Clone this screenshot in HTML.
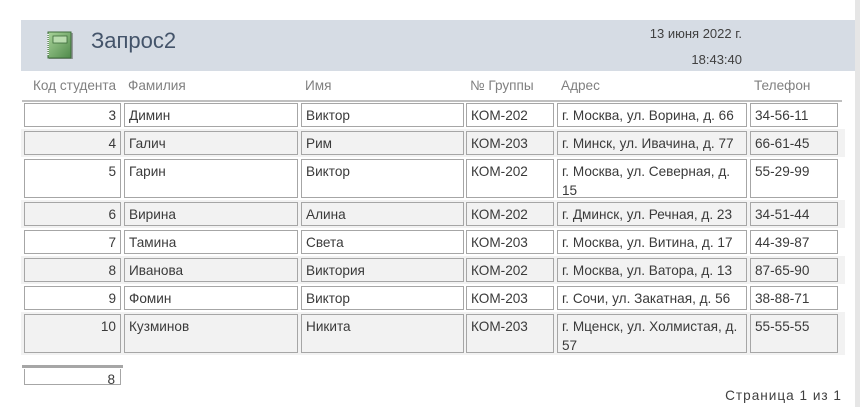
<!DOCTYPE html>
<html><head><meta charset="utf-8"><style>
*{margin:0;padding:0;box-sizing:border-box}
body{width:860px;height:407px;background:#fff;position:relative;overflow:hidden;font-family:"Liberation Sans",sans-serif;}
.a{position:absolute}
.hdr{left:21px;top:20px;width:834px;height:51px;background:#d6dce4}
.sb{left:855px;top:0;width:5px;height:407px;background:#e6e6e6}
.t{font-size:22px;color:#44546a;left:91px;top:28px}
.d{font-size:13px;color:#404040;right:118px}
.h{font-size:13.6px;color:#808080;top:78px}
.line{left:22px;top:100px;width:820px;height:2px;background:#bfbfbf}
.band{left:21px;width:824px;background:#f2f2f2}
.b{border:1px solid #a6a6a6;font-size:13.6px;color:#3a3a3a;padding:2px 4px;line-height:19px;overflow:hidden}
.r{text-align:right}
</style></head><body>
<div class="a sb"></div>
<div class="a hdr"></div>
<svg class="a" style="left:46px;top:31px" width="30" height="30" viewBox="0 0 30 30">
<defs><linearGradient id="g" x1="0" y1="0" x2="1" y2="1"><stop offset="0" stop-color="#a9d39a"/><stop offset="1" stop-color="#4f8a4a"/></linearGradient></defs>
<rect x="3" y="2" width="24" height="26" fill="#555" opacity=".5"/>
<rect x="2" y="1" width="23" height="26" fill="url(#g)" stroke="#3d6b3a"/>
<rect x="7" y="5" width="14" height="7" fill="#b9dcae" stroke="#3d6b3a" stroke-width=".8"/>
<path d="M2 3v22" stroke="#eee" stroke-dasharray="1 1" stroke-width="2"/>
</svg>
<div class="a t">Запрос2</div>
<div class="a d" style="top:26px">13 июня 2022 г.</div>
<div class="a d" style="top:52px">18:43:40</div>
<div class="a h" style="left:33px">Код студента</div>
<div class="a h" style="left:128px">Фамилия</div>
<div class="a h" style="left:305px">Имя</div>
<div class="a h" style="left:470px">№ Группы</div>
<div class="a h" style="left:561px">Адрес</div>
<div class="a h" style="left:754px">Телефон</div>
<div class="a line"></div>
<div id="rows"></div>
<script>
var data=[
["3","Димин","Виктор","КОМ-202","г. Москва, ул. Ворина, д. 66","34-56-11",0],
["4","Галич","Рим","КОМ-203","г. Минск, ул. Ивачина, д. 77","66-61-45",0],
["5","Гарин","Виктор","КОМ-202","г. Москва, ул. Северная, д. 15","55-29-99",1],
["6","Вирина","Алина","КОМ-202","г. Дминск, ул. Речная, д. 23","34-51-44",0],
["7","Тамина","Света","КОМ-203","г. Москва, ул. Витина, д. 17","44-39-87",0],
["8","Иванова","Виктория","КОМ-202","г. Москва, ул. Ватора, д. 13","87-65-90",0],
["9","Фомин","Виктор","КОМ-203","г. Сочи, ул. Закатная, д. 56","38-88-71",0],
["10","Кузминов","Никита","КОМ-203","г. Мценск, ул. Холмистая, д. 57","55-55-55",1]];
var cols=[[24,97],[124,174],[301,163],[466,88],[557,190],[750,88]];
var y=103,h="";
data.forEach(function(r,i){var ht=r[6]?39:24;
if(i%2)h+='<div class="a band" style="top:'+(y-2)+'px;height:'+(ht+4)+'px"></div>';
cols.forEach(function(c,j){h+='<div class="a b'+(j==0?' r':'')+'" style="left:'+c[0]+'px;top:'+y+'px;width:'+c[1]+'px;height:'+ht+'px">'+r[j]+'</div>';});
y+=ht+4;});
document.getElementById('rows').innerHTML=h;
</script>
<div class="a" style="left:22px;top:365px;width:101px;height:3px;background:#a6a6a6"></div>
<div class="a" style="left:24px;top:369px;width:97px;height:16px;border:1px solid #a6a6a6;border-top:none;overflow:hidden;font-size:13.6px;color:#3a3a3a;text-align:right;padding-right:5px;line-height:22px">8</div>
<div class="a" style="right:18px;top:388px;font-size:13.6px;letter-spacing:1px;color:#404040">Страница 1 из 1</div>
</body></html>
